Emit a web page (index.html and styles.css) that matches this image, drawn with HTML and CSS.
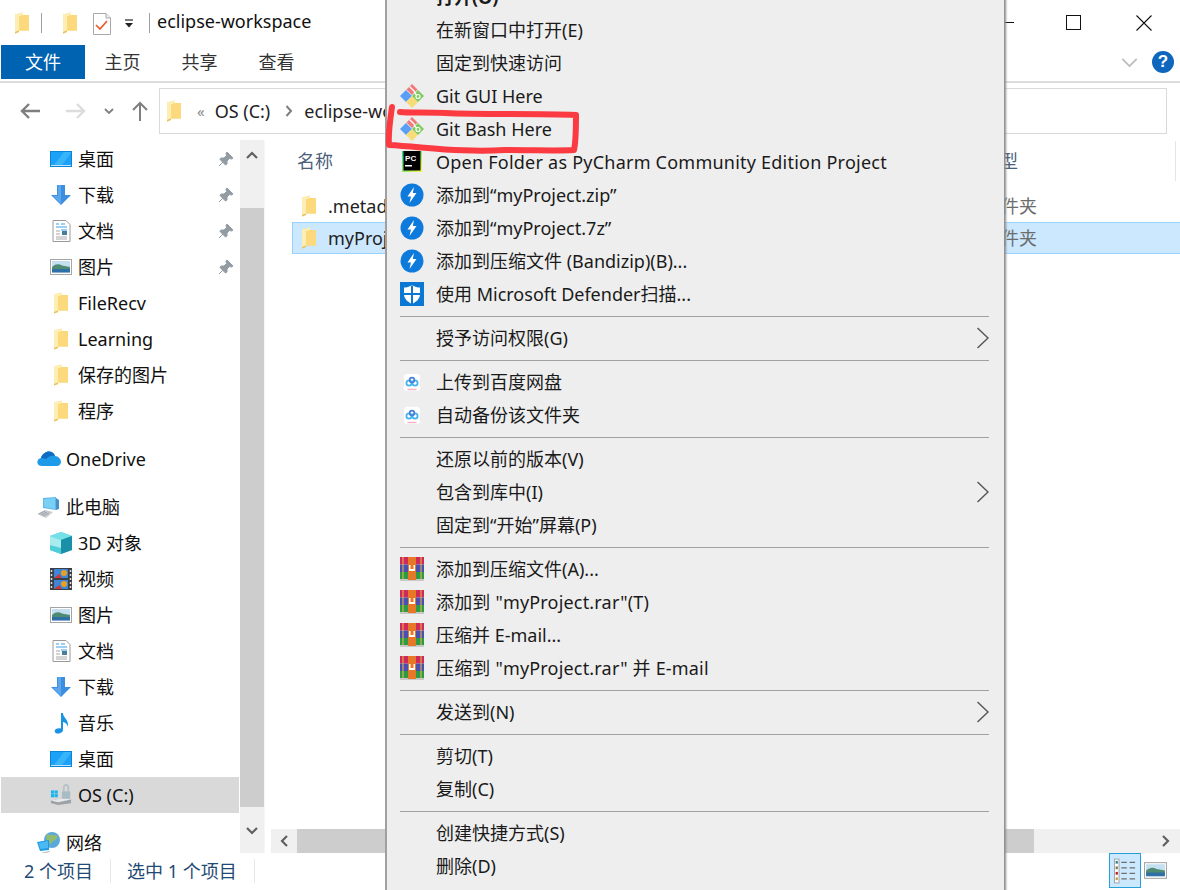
FILE: index.html
```html
<!DOCTYPE html>
<html lang="zh-CN">
<head>
<meta charset="utf-8">
<title>eclipse-workspace</title>
<link rel="stylesheet" href="styles.css">
</head>
<body>
<svg class="defs" width="0" height="0" aria-hidden="true">
  <defs>
    <symbol id="folder" viewBox="0 0 16 22">
      <path d="M1 2.500 L9 0.500 V3 L15 3 V18.500 L5 18.500 V20 L1 21.500Z" fill="#f8d775"/>
      <path d="M1 2.500 L9 0.500 V3 L5 4.500 V18.500 L1 20Z" fill="#fdeeb4"/>
      <path d="M5 4.500 L15 3 V18.500 H5Z" fill="#fcd97c"/>
      <path d="M1 20 L5 18.500 V20 L1 21.500Z" fill="#e6c25e"/>
    </symbol>
    <symbol id="desktop" viewBox="0 0 22 22">
      <rect x="0" y="3" width="22" height="16" fill="#0a84d8"/>
      <rect x="1" y="4" width="20" height="13" fill="#1ba1f7"/>
      <path d="M4 17 L14 4 H21 V5 L12 17Z" fill="#38b4fb"/>
      <rect x="1" y="17" width="20" height="1" fill="#bfe4fb"/>
    </symbol>
    <symbol id="down" viewBox="0 0 22 22">
      <path d="M7 1 H15 V11 H21 L11 21 L1 11 H7Z" fill="#3c8fe0"/>
      <path d="M8 1 H11 V20 L3 12 H8Z" fill="#5aa7ec"/>
    </symbol>
    <symbol id="doc" viewBox="0 0 22 22">
      <path d="M3 0.500 H16 L20 4.500 V21.500 H3Z" fill="#fff" stroke="#9a9a9a"/>
      <path d="M6 4 H9 M11 4 H15 M6 7 H17 M11 10 H17" stroke="#3aa0e6" stroke-width="1.200"/>
      <rect x="12" y="11" width="5" height="4" fill="#4a7d9c"/>
      <path d="M6 11 H10 M6 14 H10 M6 17 H17 M6 19 H17" stroke="#a8a8a8" stroke-width="1"/>
    </symbol>
    <symbol id="pic" viewBox="0 0 22 22">
      <rect x="0.500" y="3.500" width="21" height="15" fill="#fff" stroke="#a5a5a5"/>
      <rect x="2" y="5" width="18" height="11.500" fill="#c4dff0"/>
      <path d="M2 11 C6 7.500 9 8 12 9.500 L20 11 V14 H2Z" fill="#4f8a72"/>
      <rect x="2" y="13" width="18" height="3.500" fill="#2f6fa8"/>
    </symbol>
    <symbol id="pin" viewBox="0 0 16 16">
      <path d="M9 1 L15 7 L13.500 8 L11.500 7.500 L9 10 L9 13 L7.500 14 L2 8.500 L3 7 L6 7 L8.500 4.500 L8 2.500Z M5 11 L1 15" fill="#949ca3" stroke="#949ca3"/>
    </symbol>
    <symbol id="cloud" viewBox="0 0 24 16">
      <path d="M5 15 C1 15 0 12 0.500 10 C1 8 3 7 4 7 C5 3 9 0.500 12 0.500 C15 0.500 17 2 18 5 C21 5 24 8 24 11 C24 13 22 15 20 15Z" fill="#1e9be8"/>
      <path d="M4 7 C5 3 9 0.500 12 0.500 C15 0.500 17 2 18 5 C14 4 11 6 9 8 C7 7 5 7 4 7Z" fill="#0f6cc0"/>
    </symbol>
    <symbol id="pc" viewBox="0 0 24 24">
      <path d="M19 3 L22 5 V14 L19 15Z" fill="#4a90c8"/>
      <path d="M6 3 L19 2 V15 L6 13Z" fill="#5fb6e8"/>
      <path d="M7 4 L18 3 V14 L7 12Z" fill="#79d0f5"/>
      <path d="M0 19 L8 15 L16 17 L9 23Z" fill="#c9ced2"/>
      <path d="M2 19 L8 16 M4 20 L10 17 M6 21 L12 18" stroke="#8e9498" stroke-width="0.800"/>
    </symbol>
    <symbol id="cube" viewBox="0 0 22 22">
      <path d="M11 0 L22 4 V18 L11 22 L0 18 V4Z" fill="#36c6d8"/>
      <path d="M11 0 L22 4 L11 8 L0 4Z" fill="#74e0e8"/>
      <path d="M0 4 L11 8 V22 L0 18Z" fill="#a8ecef"/>
      <path d="M0 13 L11 16 V22 L0 18Z" fill="#50cdd8"/>
      <path d="M11 8 L22 4 V18 L11 22Z" fill="#1a8fa8"/>
    </symbol>
    <symbol id="video" viewBox="0 0 22 22">
      <rect width="22" height="22" fill="#3a3f45"/>
      <rect x="4" y="1" width="14" height="9" fill="#3f86d8"/>
      <rect x="4" y="12" width="14" height="9" fill="#3f86d8"/>
      <circle cx="14" cy="5" r="3" fill="#e8a020"/>
      <circle cx="14" cy="16" r="3" fill="#e8a020"/>
      <path d="M4 10 L9 6 L12 10Z M4 21 L9 17 L12 21Z" fill="#c83a3a"/>
      <path d="M1.500 2 V20.500 M20.500 2 V20.500" stroke="#ddd" stroke-width="1.500" stroke-dasharray="2 2"/>
    </symbol>
    <symbol id="music" viewBox="0 0 22 22">
      <path d="M11 1 H13 C13 6 19 7 18 15 C17.500 12 15 10.500 13 10 V18 C13 20.500 9.500 22 7 21.500 C4.500 21 4 18.500 6 17 C7.500 16 9.500 16 11 16.500Z" fill="#1b93e4"/>
    </symbol>
    <symbol id="drive" viewBox="0 0 24 24">
      <path d="M1 18 L16 15 L23 17 V21 L9 23 L1 21Z" fill="#9da3a7"/>
      <path d="M1 18 L9 20 L23 17 L16 15Z" fill="#e6e8ea"/>
      <rect x="1" y="7" width="3.500" height="3.500" fill="#18b4ef"/>
      <rect x="5" y="7" width="3.500" height="3.500" fill="#18b4ef"/>
      <rect x="1" y="11" width="3.500" height="3.500" fill="#18b4ef"/>
      <rect x="5" y="11" width="3.500" height="3.500" fill="#18b4ef"/>
      <rect x="13" y="8" width="9" height="8" rx="1" fill="#a9bbc4"/>
      <path d="M15 8 V4 C15 0 20 0 20 4 V8" fill="none" stroke="#b4c0c6" stroke-width="1.800"/>
    </symbol>
    <symbol id="net" viewBox="0 0 24 24">
      <circle cx="15" cy="9" r="8" fill="#5aa9d8"/>
      <path d="M10 3 C14 5 18 3 21 5 C20 10 15 9 14 13 C11 12 8 9 10 3Z" fill="#8fbc70"/>
      <path d="M0 11 L12 9 V19 L3 20Z" fill="#1e9be8"/>
      <path d="M1.500 12 L11 10 V17 L3.500 18Z" fill="#4db9f2"/>
      <path d="M4 22 L12 20 L13 21 L5 23Z" fill="#b8bec2"/>
    </symbol>
    <symbol id="git" viewBox="0 0 24 24">
      <path d="M0 12 L6 6 L12 12 L6 18Z" fill="#5b9ef5"/>
      <path d="M6 18 L12 12 L18 18 L12 24Z" fill="#f7dc78"/>
      <path d="M12 12 L18 6 L24 12 L18 18Z" fill="#7fcb5e"/>
      <path d="M6.500 5.500 L12 0 L17.500 5.500 L12 11Z" fill="#ef7a78"/>
      <path d="M9.500 2.500 L15 8" stroke="#fff" stroke-width="1.300"/>
      <path d="M14 8 L16.500 11" stroke="#fff" stroke-width="1.300"/>
      <circle cx="18" cy="12.500" r="2" fill="#7fcb5e" stroke="#fff" stroke-width="1.200"/>
    </symbol>
    <symbol id="bandizip" viewBox="0 0 24 24">
      <circle cx="12" cy="12" r="11.500" fill="#0e7bdc"/>
      <path d="M14 4 L7.500 13.500 H11 L9.500 20 L16.500 10 H12.800Z" fill="#fff"/>
    </symbol>
    <symbol id="defender" viewBox="0 0 24 24">
      <rect width="24" height="24" fill="#0b78d4"/>
      <path d="M12 3 C15 5 17.500 5.500 20 5.500 V12 C20 17 16 20 12 22 C8 20 4 17 4 12 V5.500 C6.500 5.500 9 5 12 3Z" fill="#fff"/>
      <path d="M11 3.500 H13 V11 H20 V13 H13 V22 H11 V13 H4 V11 H11Z" fill="#0b78d4"/>
    </symbol>
    <symbol id="baidu" viewBox="0 0 24 24">
      <rect x="4" y="4" width="16" height="17" rx="3" fill="#fff"/>
      <circle cx="9" cy="13" r="2.600" fill="none" stroke="#45b4f0" stroke-width="1.800"/>
      <circle cx="15" cy="13" r="2.600" fill="none" stroke="#45b4f0" stroke-width="1.800"/>
      <circle cx="12" cy="10" r="2.400" fill="none" stroke="#4a7fd8" stroke-width="1.600"/>
      <path d="M7.500 19.500 H16.500" stroke="#f7b3c6" stroke-width="1.500"/>
    </symbol>
    <symbol id="rar" viewBox="0 0 24 24">
      <rect y="0" width="24" height="7.500" fill="#cf2a5c"/>
      <rect y="7.500" width="24" height="7.500" fill="#4a4fb0"/>
      <rect y="15" width="24" height="7.500" fill="#2e9a46"/>
      <rect y="22" width="24" height="2" fill="#c8c8c8"/>
      <rect x="8" y="0" width="8" height="23" fill="#e67828"/>
      <path d="M9 8 V14 H15 V8 H13.500 V12 H10.500 V8Z" fill="#fff"/>
      <path d="M3 0 V22 M21 0 V22" stroke="#e8c040" stroke-width="1"/>
    </symbol>
  </defs>
</svg>

<div class="window">
  <header class="titlebar">
    <svg class="qa-folder"><use href="#folder"/></svg>
    <span class="qa-sep"></span>
    <svg class="qa-folder qa-second"><use href="#folder"/></svg>
    <svg class="qa-check" viewBox="0 0 18 22">
      <path d="M0.500 0.500 H13 L17.500 5 V21.500 H0.500Z" fill="#fff" stroke="#a8a8a8"/>
      <path d="M13 0.500 V5 H17.500" fill="#eee" stroke="#a8a8a8"/>
      <path d="M3 12 L7 16 L14 8" fill="none" stroke="#ea5b2a" stroke-width="1.700"/>
    </svg>
    <svg class="qa-drop" viewBox="0 0 10 10">
      <path d="M1 1 H9" stroke="#222" stroke-width="1.200"/>
      <path d="M1 4 H9 L5 8.500Z" fill="#222"/>
    </svg>
    <span class="qa-sep qa-sep-b"></span>
    <span class="title">eclipse-workspace</span>
    <div class="winctl">
      <span class="min"></span>
      <span class="max"></span>
      <svg class="close" viewBox="0 0 16 16"><path d="M0.500 0.500 L15.500 15.500 M15.500 0.500 L0.500 15.500" stroke="#111" stroke-width="1.100"/></svg>
    </div>
  </header>

  <nav class="ribbon">
    <span class="tab tab-file">文件</span>
    <span class="tab">主页</span>
    <span class="tab">共享</span>
    <span class="tab">查看</span>
    <svg class="rb-chev" viewBox="0 0 18 10"><path d="M1 1 L9 9 L17 1" fill="none" stroke="#bdbdbd" stroke-width="2"/></svg>
    <span class="help">?</span>
  </nav>

  <div class="addr-row">
    <svg class="nav nav-back" viewBox="0 0 20 16"><path d="M9 1 L2 8 L9 15 M2 8 H20" fill="none" stroke="#7f7f7f" stroke-width="2.400"/></svg>
    <svg class="nav nav-fwd" viewBox="0 0 20 16"><path d="M11 1 L18 8 L11 15 M18 8 H0" fill="none" stroke="#dcdcdc" stroke-width="2.400"/></svg>
    <svg class="nav nav-hist" viewBox="0 0 10 6"><path d="M1 1 L5 5 L9 1" fill="none" stroke="#7f7f7f" stroke-width="1.800"/></svg>
    <svg class="nav nav-up" viewBox="0 0 16 20"><path d="M1 9 L8 2 L15 9 M8 2 V20" fill="none" stroke="#7f7f7f" stroke-width="2"/></svg>
    <div class="addr">
      <svg class="addr-folder"><use href="#folder"/></svg>
      <span class="addr-more">«</span>
      <span>OS (C:)</span>
      <svg class="addr-sep" viewBox="0 0 8 12"><path d="M1.500 1 L6 6 L1.500 11" fill="none" stroke="#7f7f7f" stroke-width="2"/></svg>
      <span>eclipse-workspace</span>
    </div>
  </div>

  <div class="main">
    <aside class="side">
      <div class="row"><svg class="ic"><use href="#desktop"/></svg>桌面<svg class="pin"><use href="#pin"/></svg></div>
      <div class="row"><svg class="ic"><use href="#down"/></svg>下载<svg class="pin"><use href="#pin"/></svg></div>
      <div class="row"><svg class="ic"><use href="#doc"/></svg>文档<svg class="pin"><use href="#pin"/></svg></div>
      <div class="row"><svg class="ic"><use href="#pic"/></svg>图片<svg class="pin"><use href="#pin"/></svg></div>
      <div class="row"><svg class="ic"><use href="#folder"/></svg>FileRecv</div>
      <div class="row"><svg class="ic"><use href="#folder"/></svg>Learning</div>
      <div class="row"><svg class="ic"><use href="#folder"/></svg>保存的图片</div>
      <div class="row"><svg class="ic"><use href="#folder"/></svg>程序</div>
      <div class="row top gap"><svg class="ic-top"><use href="#cloud"/></svg>OneDrive</div>
      <div class="row top gap"><svg class="ic-top"><use href="#pc"/></svg>此电脑</div>
      <div class="row"><svg class="ic"><use href="#cube"/></svg>3D 对象</div>
      <div class="row"><svg class="ic"><use href="#video"/></svg>视频</div>
      <div class="row"><svg class="ic"><use href="#pic"/></svg>图片</div>
      <div class="row"><svg class="ic"><use href="#doc"/></svg>文档</div>
      <div class="row"><svg class="ic"><use href="#down"/></svg>下载</div>
      <div class="row"><svg class="ic"><use href="#music"/></svg>音乐</div>
      <div class="row"><svg class="ic"><use href="#desktop"/></svg>桌面</div>
      <div class="row selected"><svg class="ic"><use href="#drive"/></svg>OS (C:)</div>
      <div class="row top gap row-net"><svg class="ic-top"><use href="#net"/></svg>网络</div>
    </aside>

    <div class="vscroll">
      <div class="sb-btn-top"><svg class="sb-ar" viewBox="0 0 12 8"><path d="M1 7 L6 2 L11 7" fill="none" stroke="#606060" stroke-width="2.200"/></svg></div>
      <div class="sb-thumb"></div>
      <div class="sb-btn-bot"><svg class="sb-ar" viewBox="0 0 12 8"><path d="M1 1 L6 6 L11 1" fill="none" stroke="#606060" stroke-width="2.200"/></svg></div>
    </div>

    <section class="content">
      <div class="colhead">
        <span class="col-name">名称</span>
        <span class="col-type">类型</span>
        <span class="col-rule"></span>
      </div>
      <div class="files">
        <div class="file"><svg class="file-ic"><use href="#folder"/></svg><span class="file-name">.metadata</span><span class="file-type">文件夹</span></div>
        <div class="file file-sel"><svg class="file-ic"><use href="#folder"/></svg><span class="file-name">myProject</span><span class="file-type">文件夹</span></div>
      </div>
      <div class="hscroll">
        <div class="hs-left"><svg class="hs-ar" viewBox="0 0 8 12"><path d="M7 1 L2 6 L7 11" fill="none" stroke="#606060" stroke-width="2.200"/></svg></div>
        <div class="hs-thumb"></div>
        <div class="hs-right"><svg class="hs-ar" viewBox="0 0 8 12"><path d="M1 1 L6 6 L1 11" fill="none" stroke="#606060" stroke-width="2.200"/></svg></div>
      </div>
    </section>
  </div>

  <footer class="status">
    <span class="st st-a">2 个项目</span>
    <span class="st st-b">选中 1 个项目</span>
    <div class="views">
      <span class="view-details">
        <svg viewBox="0 0 24 28" class="vd-ic">
          <rect x="0.500" y="1" width="5" height="26" fill="#fff" stroke="#a0a0a0"/>
          <rect x="1.800" y="3" width="2.400" height="3" fill="#2f7f9c"/><rect x="1.800" y="9" width="2.400" height="3" fill="#7a7a50"/><rect x="1.800" y="15" width="2.400" height="3" fill="#b02020"/><rect x="1.800" y="21" width="2.400" height="3" fill="#c0a040"/>
          <path d="M8 4.500 H14 M17 4.500 H23 M8 10.500 H14 M17 10.500 H23 M8 16.500 H14 M17 16.500 H23 M8 22.500 H14 M17 22.500 H23" stroke="#6f6f6f" stroke-width="1.300"/>
        </svg>
      </span>
      <svg class="view-thumb"><use href="#pic"/></svg>
    </div>
  </footer>
</div>

<div class="menu">
  <div class="mi mi-bold"><span class="mi-slot"></span>打开(O)</div>
  <div class="mi"><span class="mi-slot"></span>在新窗口中打开(E)</div>
  <div class="mi"><span class="mi-slot"></span>固定到快速访问</div>
  <div class="mi"><svg class="mi-slot"><use href="#git"/></svg>Git GUI Here</div>
  <div class="mi"><svg class="mi-slot"><use href="#git"/></svg>Git Bash Here</div>
  <div class="mi mi-wide">
    <svg class="mi-slot" viewBox="0 0 24 24">
      <defs><linearGradient id="pcg" x1="0" y1="0" x2="1" y2="1"><stop offset="0" stop-color="#21d789"/><stop offset="1" stop-color="#fcf84a"/></linearGradient></defs>
      <rect x="2" y="1" width="20" height="21" fill="url(#pcg)"/>
      <rect x="3.500" y="1" width="17" height="19.500" fill="#000"/>
      <text x="5" y="10.500" class="pc-text">PC</text>
      <rect x="5" y="15" width="7" height="1.500" fill="#fff"/>
    </svg>Open Folder as PyCharm Community Edition Project</div>
  <div class="mi"><svg class="mi-slot"><use href="#bandizip"/></svg>添加到“myProject.zip”</div>
  <div class="mi"><svg class="mi-slot"><use href="#bandizip"/></svg>添加到“myProject.7z”</div>
  <div class="mi"><svg class="mi-slot"><use href="#bandizip"/></svg>添加到压缩文件 (Bandizip)(B)...</div>
  <div class="mi"><svg class="mi-slot"><use href="#defender"/></svg>使用 Microsoft Defender扫描...</div>
  <div class="msep"></div>
  <div class="mi"><span class="mi-slot"></span>授予访问权限(G)<svg class="mi-arrow" viewBox="0 0 14 22"><path d="M1.500 1 L12 11 L1.500 21" fill="none" stroke="#555" stroke-width="1.400"/></svg></div>
  <div class="msep"></div>
  <div class="mi"><svg class="mi-slot"><use href="#baidu"/></svg>上传到百度网盘</div>
  <div class="mi"><svg class="mi-slot"><use href="#baidu"/></svg>自动备份该文件夹</div>
  <div class="msep"></div>
  <div class="mi"><span class="mi-slot"></span>还原以前的版本(V)</div>
  <div class="mi"><span class="mi-slot"></span>包含到库中(I)<svg class="mi-arrow" viewBox="0 0 14 22"><path d="M1.500 1 L12 11 L1.500 21" fill="none" stroke="#555" stroke-width="1.400"/></svg></div>
  <div class="mi"><span class="mi-slot"></span>固定到“开始”屏幕(P)</div>
  <div class="msep"></div>
  <div class="mi"><svg class="mi-slot"><use href="#rar"/></svg>添加到压缩文件(A)...</div>
  <div class="mi mi-rar"><svg class="mi-slot"><use href="#rar"/></svg>添加到 "myProject.rar"(T)</div>
  <div class="mi"><svg class="mi-slot"><use href="#rar"/></svg>压缩并 E-mail...</div>
  <div class="mi mi-rar"><svg class="mi-slot"><use href="#rar"/></svg>压缩到 "myProject.rar" 并 E-mail</div>
  <div class="msep"></div>
  <div class="mi"><span class="mi-slot"></span>发送到(N)<svg class="mi-arrow" viewBox="0 0 14 22"><path d="M1.500 1 L12 11 L1.500 21" fill="none" stroke="#555" stroke-width="1.400"/></svg></div>
  <div class="msep"></div>
  <div class="mi"><span class="mi-slot"></span>剪切(T)</div>
  <div class="mi"><span class="mi-slot"></span>复制(C)</div>
  <div class="msep"></div>
  <div class="mi"><span class="mi-slot"></span>创建快捷方式(S)</div>
  <div class="mi"><span class="mi-slot"></span>删除(D)</div>
</div>

<svg class="annot" viewBox="0 0 200 60">
  <path d="M7 4 C5 18 3 30 4 42 C40 44 80 50 120 47 C150 47 170 48 189 47 C191 38 191 22 191 12 C150 10 100 12 60 10 C40 9 25 10 15 9" fill="none" stroke="#fb3a41" stroke-width="6" stroke-linecap="round" stroke-linejoin="round"/>
</svg>
</body>
</html>
```

FILE: styles.css
```css
* { box-sizing: border-box; }
html, body {
  margin: 0;
  width: 1180px;
  height: 890px;
  overflow: hidden;
  background: #fff;
  color: #111;
  font: 18px/24px "Noto Sans", "Noto Sans CJK SC", sans-serif;
}
.defs { position: absolute; }
svg { display: block; flex: none; }
.pc-text { font: 700 8px "Liberation Sans", sans-serif; fill: #fff; }

.window { width: 1180px; height: 890px; display: flex; flex-direction: column; overflow: hidden; }

/* title bar */
.titlebar { height: 45px; flex: none; display: flex; align-items: center; padding-left: 14px; }
.qa-folder { width: 16px; height: 22px; }
.qa-second { margin-left: 20px; }
.qa-sep { width: 1px; height: 20px; background: #a0a0a0; margin-left: 11px; }
.qa-sep-b { margin-left: 15px; }
.qa-check { width: 18px; height: 22px; margin-left: 15px; margin-top: 3px; }
.qa-drop { width: 10px; height: 10px; margin-left: 13px; margin-top: 3px; }
.title { margin-left: 7px; position: relative; top: -2px; }
.winctl { margin-left: auto; display: flex; align-items: center; padding-right: 28px; }
.min { width: 10px; height: 1px; background: #111; }
.max { width: 15px; height: 15px; border: 1px solid #111; margin-left: 52px; }
.close { width: 16px; height: 16px; margin-left: 55px; }

/* ribbon */
.ribbon { height: 38px; flex: none; display: flex; align-items: flex-start; padding-left: 1px; border-bottom: 2px solid #dcdcdc; }
.tab { height: 34px; line-height: 34px; width: 77px; text-align: center; color: #333; }
.tab-file { width: 84px; background: #0063b1; color: #fff; }
.tab-file + .tab { margin-left: -1px; }
.rb-chev { width: 17px; height: 9px; margin: 13px 0 0 auto; }
.help { width: 22px; height: 22px; border-radius: 50%; background: #0f66bd; color: #fff; font: 700 17px/22px "Liberation Sans", sans-serif; text-align: center; margin: 6px 6px 0 14px; }

/* address */
.addr-row { height: 57px; flex: none; display: flex; align-items: center; padding: 5px 13px 7px 20px; }
.nav-back { width: 20px; height: 16px; }
.nav-fwd { width: 20px; height: 16px; margin-left: 26px; }
.nav-hist { width: 10px; height: 6px; margin-left: 18px; }
.nav-up { width: 16px; height: 20px; margin-left: 18px; }
.addr { flex: 1; height: 46px; margin-left: 11px; border: 1px solid #d9d9d9; display: flex; align-items: center; padding-left: 6px; gap: 10px; white-space: nowrap; overflow: hidden; color: #222; }
.addr-folder { width: 16px; height: 22px; }
.addr-more { color: #8a8a8a; font-size: 15px; margin-left: 5px; }
.addr-sep { width: 8px; height: 12px; margin: 0 1px 0 5px; }

/* main area */
.main { flex: 1; min-height: 0; display: flex; }
.side { width: 240px; flex: none; overflow: hidden; padding-top: 1px; }
.row { height: 36px; display: flex; align-items: center; padding-left: 50px; white-space: nowrap; }
.row.top { padding-left: 37px; }
.gap { margin-top: 12px; }
.ic { width: 22px; height: 22px; margin-right: 6px; }
.ic-top { width: 24px; height: 24px; margin-right: 5px; }
.pin { width: 16px; height: 16px; margin-left: auto; margin-right: 6px; }
.selected { background: #d9d9d9; margin: 0 1px; padding-left: 49px; }
.row-net { height: 28px; align-items: flex-start; padding-top: 8px; line-height: 20px; }
.row-net .ic-top { margin-top: -2px; }

.vscroll { width: 25px; flex: none; background: #f0f0f0; margin-right: 6px; display: flex; flex-direction: column; border-right: 1px solid #f7f7f7; }
.sb-btn-top { height: 68px; padding-top: 11px; }
.sb-btn-bot { height: 46px; padding-top: 20px; }
.sb-ar { width: 12px; height: 8px; margin: 0 auto; }
.sb-thumb { flex: 1; background: #cdcdcd; }

.content { flex: 1; min-width: 0; display: flex; flex-direction: column; }
.colhead { height: 42px; flex: none; display: flex; align-items: center; color: #4c607a; padding-left: 26px; }
.col-type { margin-left: 649px; }
.col-rule { width: 1px; height: 40px; background: #e5e5e5; margin-left: auto; margin-right: 4px; }
.files { flex: 1; padding: 8px 0 0 21px; }
.file { height: 32px; display: flex; align-items: center; padding-left: 8px; border: 1px solid transparent; border-right: 0; color: #222; }
.file-sel { background: #cce8ff; border-color: #99d1ff; }
.file-ic { width: 16px; height: 22px; margin-right: 11px; }
.file-name { width: 655px; }
.file-type { color: #6d6d6d; }

.hscroll { height: 24px; flex: none; background: #f0f0f0; display: flex; }
.hs-left { width: 26px; display: flex; align-items: center; justify-content: center; }
.hs-thumb { width: 737px; background: #cdcdcd; }
.hs-right { flex: 1; display: flex; align-items: center; justify-content: flex-end; padding-right: 10px; }
.hs-ar { width: 8px; height: 12px; }

/* status bar */
.status { height: 37px; flex: none; display: flex; align-items: center; color: #1f4a75; padding: 0 0 2px 24px; white-space: nowrap; }
.st { display: block; position: relative; }
.st-a { width: 103px; }
.st-b { width: 127px; }
.st::after { content: ""; position: absolute; top: 0; width: 1px; height: 24px; background: #e8e8e8; }
.st-a::after { left: 86px; }
.st-b::after { left: 127px; }
.views { margin-left: auto; display: flex; align-items: center; padding-right: 13px; }
.view-details { width: 32px; height: 35px; background: #cce8ff; border: 1px solid #26a0da; display: flex; align-items: center; justify-content: center; }
.vd-ic { width: 22px; height: 26px; }
.view-thumb { width: 23px; height: 23px; margin-left: 3px; }

/* context menu over the window */
.menu { position: absolute; left: 385px; top: -20px; width: 619px; background: #eeeeee; border-left: 2px solid #a0a0a0; padding: 0 15px 24px 13px; box-shadow: 2px 0 2px #8d8d8d; color: #1a1a1a; }
.mi { height: 33px; display: flex; align-items: center; white-space: nowrap; }
.mi-bold { font-weight: 700; }
.mi-wide { letter-spacing: 0.23px; }
.mi-rar { letter-spacing: 0.18px; }
.mi-slot { width: 24px; height: 24px; margin-right: 12px; flex: none; display: block; }
.mi-arrow { width: 14px; height: 22px; margin-left: auto; margin-right: -1px; }
.msep { height: 11px; position: relative; }
.msep::after { content: ""; position: absolute; left: 0; right: 0; top: 6px; height: 1px; background: #a0a0a0; }

.annot { position: absolute; left: 385px; top: 103px; width: 200px; height: 60px; overflow: visible; }
```
